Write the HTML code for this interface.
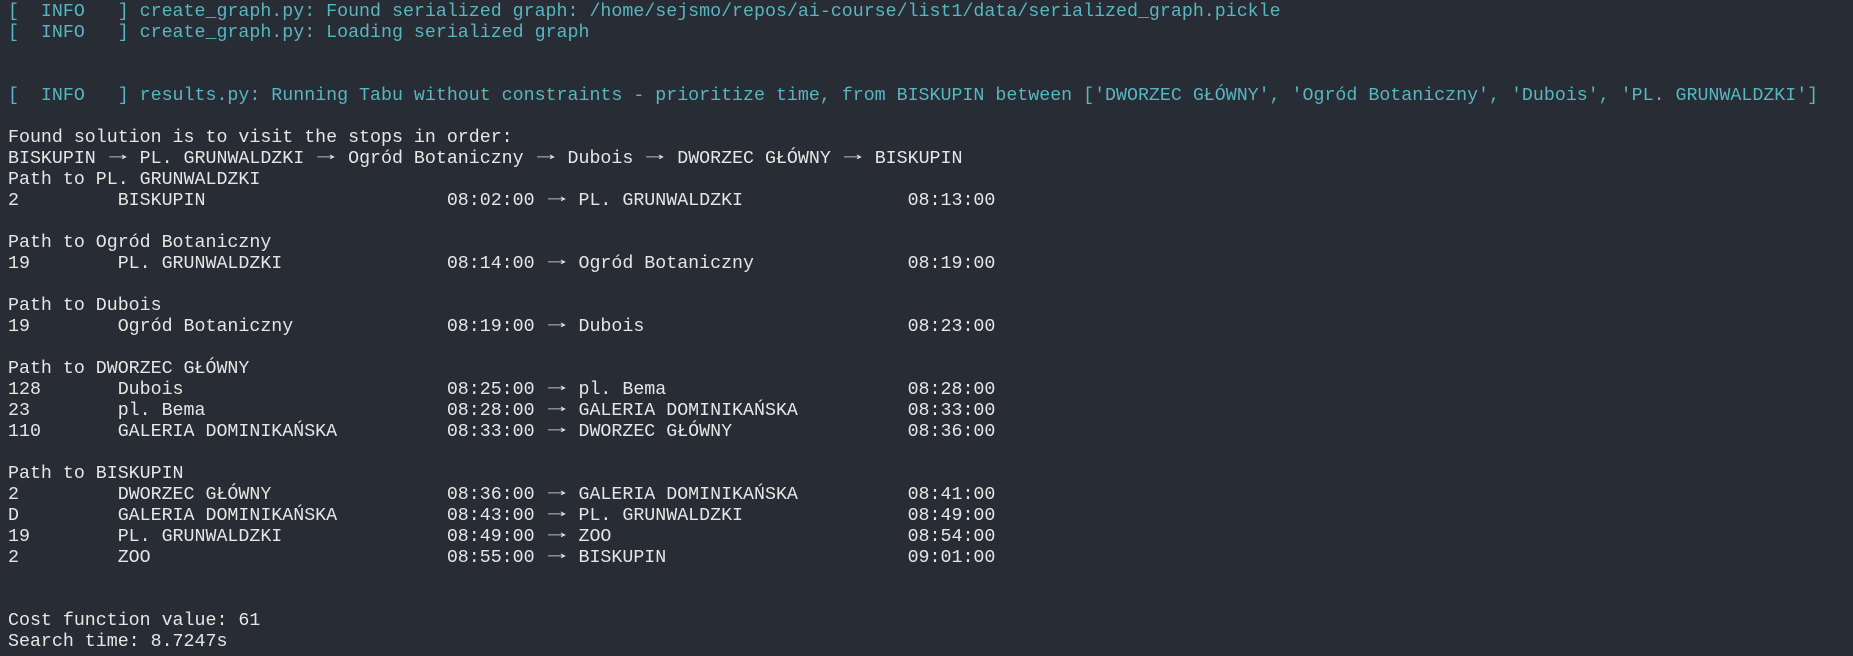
<!DOCTYPE html>
<html><head><meta charset="utf-8"><style>
html,body{margin:0;padding:0;background:#282c34;width:1853px;height:656px;overflow:hidden}
pre{margin:0;position:absolute;left:8px;top:2px;font-family:"Liberation Mono",monospace;font-size:18.3px;line-height:21px;color:#e6e6e6;white-space:pre}
.c{color:#56b6c2}
i{font-style:normal;display:inline-block;width:2ch;text-align:center;transform:translateY(-3px) scaleX(1.6)}
</style></head><body>
<pre><span class="c">[  INFO   ] create_graph.py: Found serialized graph: /home/sejsmo/repos/ai-course/list1/data/serialized_graph.pickle
[  INFO   ] create_graph.py: Loading serialized graph


[  INFO   ] results.py: Running Tabu without constraints - prioritize time, from BISKUPIN between ['DWORZEC GŁÓWNY', 'Ogród Botaniczny', 'Dubois', 'PL. GRUNWALDZKI']</span>

Found solution is to visit the stops in order:
BISKUPIN <i>→</i> PL. GRUNWALDZKI <i>→</i> Ogród Botaniczny <i>→</i> Dubois <i>→</i> DWORZEC GŁÓWNY <i>→</i> BISKUPIN
Path to PL. GRUNWALDZKI
2         BISKUPIN                      08:02:00 <i>→</i> PL. GRUNWALDZKI               08:13:00

Path to Ogród Botaniczny
19        PL. GRUNWALDZKI               08:14:00 <i>→</i> Ogród Botaniczny              08:19:00

Path to Dubois
19        Ogród Botaniczny              08:19:00 <i>→</i> Dubois                        08:23:00

Path to DWORZEC GŁÓWNY
128       Dubois                        08:25:00 <i>→</i> pl. Bema                      08:28:00
23        pl. Bema                      08:28:00 <i>→</i> GALERIA DOMINIKAŃSKA          08:33:00
110       GALERIA DOMINIKAŃSKA          08:33:00 <i>→</i> DWORZEC GŁÓWNY                08:36:00

Path to BISKUPIN
2         DWORZEC GŁÓWNY                08:36:00 <i>→</i> GALERIA DOMINIKAŃSKA          08:41:00
D         GALERIA DOMINIKAŃSKA          08:43:00 <i>→</i> PL. GRUNWALDZKI               08:49:00
19        PL. GRUNWALDZKI               08:49:00 <i>→</i> ZOO                           08:54:00
2         ZOO                           08:55:00 <i>→</i> BISKUPIN                      09:01:00


Cost function value: 61
Search time: 8.7247s</pre>
</body></html>
